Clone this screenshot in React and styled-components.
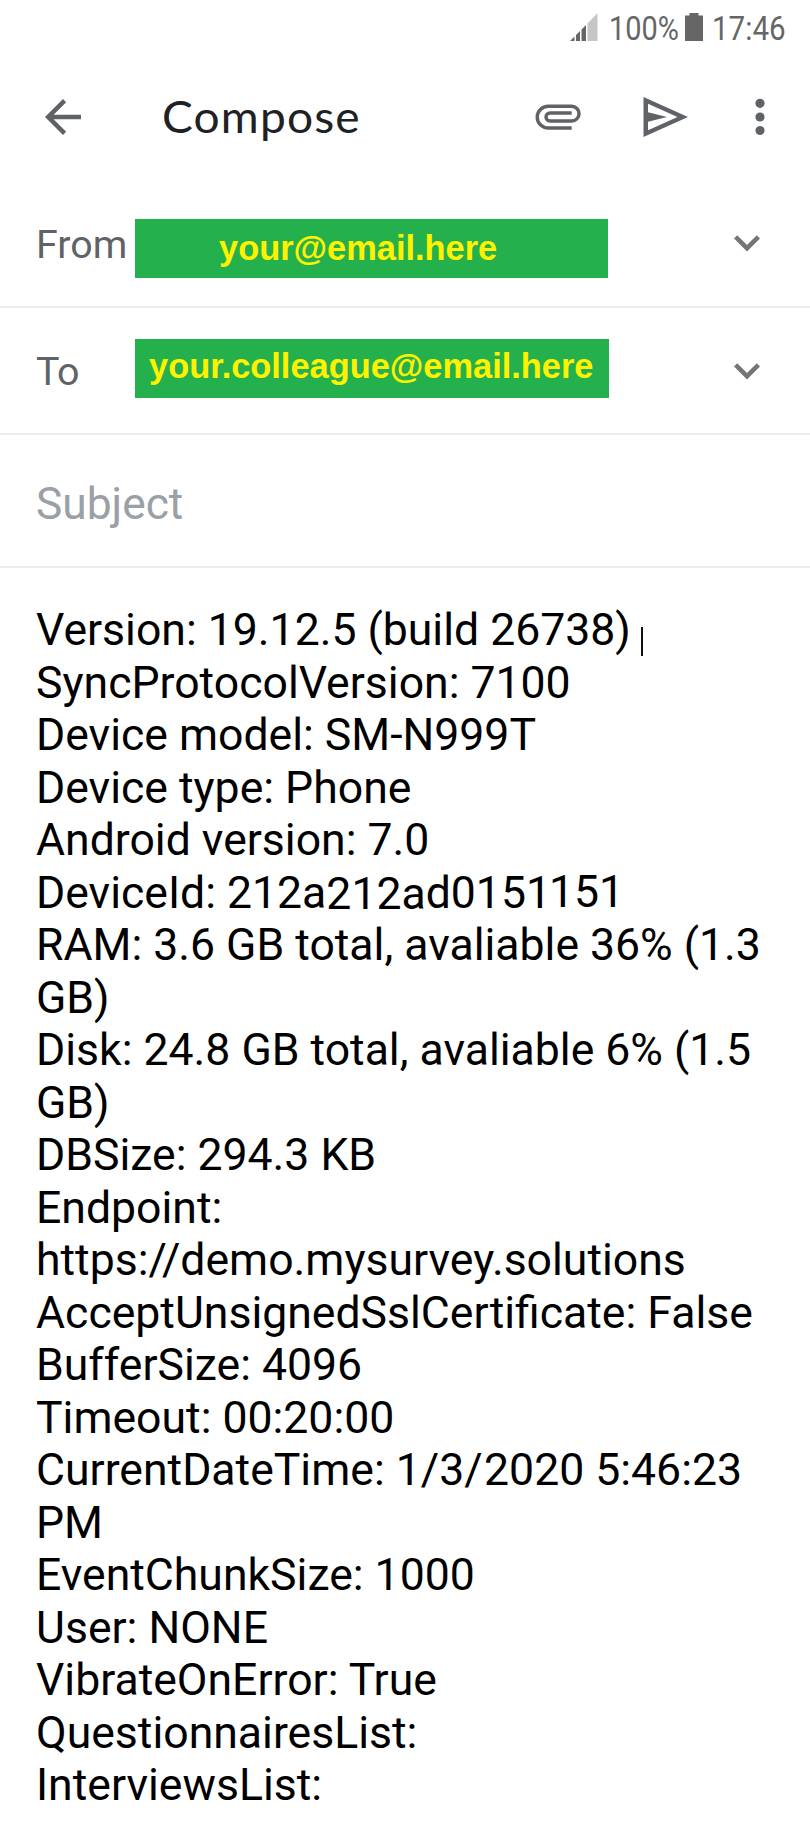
import React from 'react';
import styled, { createGlobalStyle } from 'styled-components';

const Global = createGlobalStyle`
  * { box-sizing: border-box; }
  body { margin: 0; background: #fff; font-family: Roboto, sans-serif; }
`;
const Screen = styled.main`
  width: 810px; height: 1848px; overflow: hidden; background: #fff;
  display: flex; flex-direction: column;
`;
const StatusBar = styled.header`
  height: 56px; flex: none; display: flex; align-items: center; justify-content: flex-end;
  padding-right: 22px; color: #666;
`;
const StatusText = styled.span`
  width: ${p => p.$w}px; white-space: nowrap; font-size: 34px; line-height: 56px;
  transform: scaleX(${p => p.$sx}); transform-origin: 0 50%;
`;
const Signal = styled.svg`width: 28px; height: 28px; margin: 0 11px 2px 0;`;
const Battery = styled.svg`width: 18px; height: 28px; margin: 0 9px 2px 5px;`;
const Toolbar = styled.nav`
  height: 124px; flex: none; display: flex; align-items: center; padding: 0 45px 2px 36px;
  color: #5f6368;
`;
const Icon = styled.svg`
  flex: none; width: ${p => p.$w}px; height: ${p => p.$h}px; margin-left: ${p => p.$ml || 0}px;
`;
const Title = styled.h1`
  margin: 0 auto 2px 72px; font: 400 43.5px/60px Lato, sans-serif; color: #202124; white-space: nowrap;
  letter-spacing: 1.1px; transform: scaleX(1.06); transform-origin: 0 50%;
`;
const Row = styled.section`
  height: ${p => p.$h}px; flex: none; border-bottom: 2px solid #ececec;
  display: flex; align-items: flex-start; padding: 0 50px 0 36px; color: #5f6368;
`;
const Label = styled.span`
  width: 99px; margin-top: ${p => p.$mt}px; font-size: 39.4px; line-height: 48px; white-space: nowrap;
  letter-spacing: ${p => p.$ls || 0}px;
`;
const Address = styled.div`
  width: ${p => p.$w}px; height: 59px; margin: ${p => p.$mt}px auto 0 0; padding-left: ${p => p.$pl}px;
  background: #24b14d; color: #fff200; white-space: nowrap;
  font: 700 34.4px/${p => p.$lh}px "Liberation Sans", sans-serif;
`;
const Chevron = styled.svg`width: 26px; height: 17px; margin-top: ${p => p.$mt}px;`;
const Subject = styled.span`
  margin-top: 43px; color: #9aa0a6; font-size: 44.3px; line-height: 53px;
`;
const Body = styled.div`
  padding: 36px 0 0 36px; color: #000; font-size: 44.55px; line-height: 52.5px;
`;
const Line = styled.div`
  white-space: pre; height: 52.5px; display: flex; letter-spacing: ${p => p.$ls || 0}px;
`;
const Caret = styled.i`width: 2px; height: 29px; margin: 23px 0 0 10px; background: #111;`;
const Digits = styled.span`margin: ${p => p.$mt || 0}px 0 0 ${p => p.$ml || 0}px;`;

const lines = [
  <>Version: 19.12.5 (build 26738)<Caret /></>,
  'SyncProtocolVersion: 7100', 'Device model: SM-N999T', 'Device type: Phone', 'Android version: 7.0',
  <>DeviceId: 212a<Digits $mt={1}>212a</Digits><Digits>d0151</Digits><Digits $mt={-1} $ml={-2}>151</Digits></>,
  'RAM: 3.6 GB total, avaliable 36% (1.3', 'GB)', 'Disk: 24.8 GB total, avaliable 6% (1.5', 'GB)',
  'DBSize: 294.3 KB', 'Endpoint:', 'https://demo.mysurvey.solutions', 'AcceptUnsignedSslCertificate: False',
  'BufferSize: 4096', 'Timeout: 00:20:00',
  <>CurrentDateTime: 1/3/<Digits $ml={1.5}>2020 5:46:23</Digits></>,
  'PM', 'EventChunkSize: 1000', 'User: NONE', 'VibrateOnError: True', 'QuestionnairesList:', 'InterviewsList:',
];

const Expand = ({ mt }) => (
  <Chevron $mt={mt} viewBox="0 0 26 17"><path d="M1.6 1.8 13 13.2 24.4 1.8" fill="none" stroke="#757575" strokeWidth="4.5" /></Chevron>
);

export default function App() {
  return <Screen><Global />
    <StatusBar>
      <Signal viewBox="0 0 28 28">
        <path d="M17.5 10.5 27.5 0V28H17.5Z" fill="#c6c6c6" />
        <path d="M0 28 4.5 23.5V28ZM6 22 10 18V28H6ZM11.5 16.5 16 12V28H11.5Z" fill="#666" />
      </Signal>
      <StatusText $w={71} $sx={.85}>100%</StatusText>
      <Battery viewBox="0 0 18 28"><path d="M0 2.5H4.5V0H13.5V2.5H18V28H0Z" fill="#666" /></Battery>
      <StatusText $w={76} $sx={.87}>17:46</StatusText>
    </StatusBar>
    <Toolbar>
      <Icon $w={54} $h={54} viewBox="0 0 24 24" fill="currentColor"><path d="M20 11H7.83l5.59-5.59L12 4l-8 8 8 8 1.41-1.41L7.83 13H20v-2z" /></Icon>
      <Title>Compose</Title>
      <Icon $w={48} $h={28} viewBox="534 104 48 28" fill="none" stroke="currentColor" strokeWidth="3.4">
        <path d="M571.7 129H548.1A10.85 10.85 0 0 1 548.1 107.3H571.7A7.35 7.35 0 0 1 571.7 122H550A4 4 0 0 1 550 114H571.7" />
      </Icon>
      <Icon $w={46} $h={42} $ml={61} viewBox="643 96 46 42" fill="currentColor" fillRule="evenodd">
        <path d="M643.5 97 688 117 643.5 137ZM648 103.8V112.3L667 117 648 121.7V130.2L677.5 117Z" />
      </Icon>
      <Icon $w={10} $h={38} $ml={66} viewBox="0 0 10 38" fill="currentColor">
        <circle cx="5" cy="5.3" r="4.6" /><circle cx="5" cy="19" r="4.6" /><circle cx="5" cy="32.5" r="4.6" />
      </Icon>
    </Toolbar>
    <Row $h={128}><Label $mt={41}>From</Label><Address $w={473} $mt={39} $pl={84} $lh={58}>your@email.here</Address><Expand mt={55} /></Row>
    <Row $h={127}><Label $mt={40} $ls={-0.7}>To</Label><Address $w={474} $mt={31} $pl={14} $lh={55}>your.colleague@email.here</Address><Expand mt={55} /></Row>
    <Row $h={133}><Subject>Subject</Subject></Row>
    <Body>{lines.map((l, i) => <Line key={i}>{l}</Line>)}</Body>
  </Screen>;
}
